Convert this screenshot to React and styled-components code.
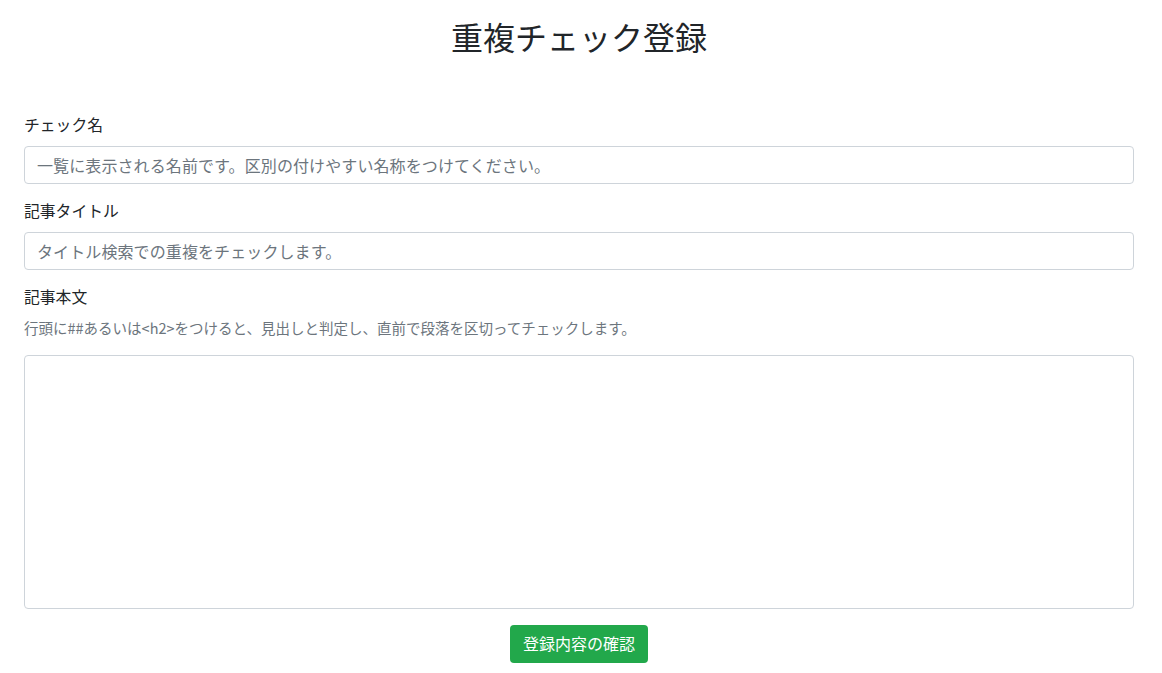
import React from "react";
import styled, { createGlobalStyle } from "styled-components";

const GlobalStyle = createGlobalStyle`
  body {
    margin: 0;
    background: #fff;
    color: #212529;
    font-family: "Noto Sans CJK JP", "Noto Sans", sans-serif;
    font-size: 16px;
    line-height: 1.5;
  }
  * { box-sizing: border-box; }
`;

const Container = styled.div`
  width: 1110px;
  margin-left: 24px;
`;

const Title = styled.h2`
  margin: 17px 0 59px;
  font-size: 32px;
  font-weight: 400;
  line-height: 1.2;
  text-align: center;
`;

const Group = styled.div`
  margin-bottom: 16px;
`;

const Label = styled.label`
  display: block;
  margin-bottom: 8px;
  font-size: 15.8px;
  line-height: 22px;
  padding-bottom: 2px;
`;

const Help = styled.small`
  display: block;
  margin: 0 0 18px;
  font-size: 14.5px;
  line-height: 19px;
  color: #6c757d;
`;

const Input = styled.input`
  display: block;
  width: 100%;
  height: 38px;
  padding: 6px 12px;
  font-family: inherit;
  font-size: 16px;
  letter-spacing: 0.1px;
  color: #495057;
  border: 1px solid #ced4da;
  border-radius: 4px;
  &::placeholder { color: #6c757d; }
`;

const TextArea = styled.textarea`
  display: block;
  width: 100%;
  height: 254px;
  padding: 6px 12px;
  font-family: inherit;
  font-size: 16px;
  border: 1px solid #ced4da;
  border-radius: 4px;
  resize: none;
`;

const Actions = styled.div`
  display: flex;
  justify-content: center;
`;

const Button = styled.button`
  height: 38px;
  padding: 0 13px 2px;
  font-family: inherit;
  font-size: 16px;
  color: #fff;
  background: #22a84b;
  border: none;
  border-radius: 4px;
  cursor: pointer;
`;

export default function App() {
  return (
    <>
      <GlobalStyle />
      <Container>
        <Title>重複チェック登録</Title>
        <Group>
          <Label>チェック名</Label>
          <Input placeholder="一覧に表示される名前です。区別の付けやすい名称をつけてください。" />
        </Group>
        <Group>
          <Label>記事タイトル</Label>
          <Input placeholder="タイトル検索での重複をチェックします。" />
        </Group>
        <Group>
          <Label>記事本文</Label>
          <Help>行頭に##あるいは&lt;h2&gt;をつけると、見出しと判定し、直前で段落を区切ってチェックします。</Help>
          <TextArea />
        </Group>
        <Actions>
          <Button>登録内容の確認</Button>
        </Actions>
      </Container>
    </>
  );
}
